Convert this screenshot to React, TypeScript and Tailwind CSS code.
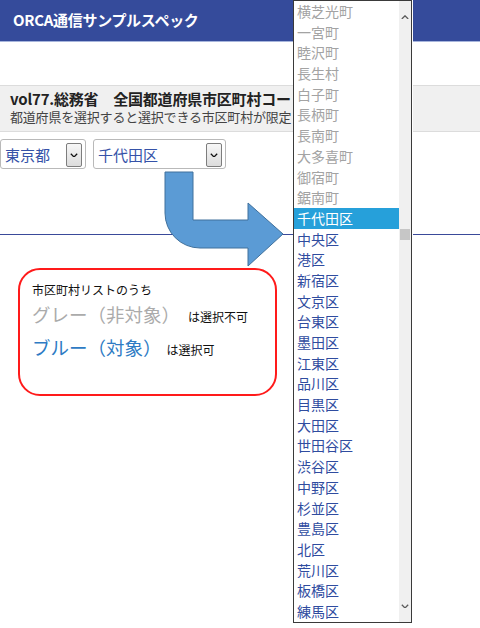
import React from "react";

const grayItems = ["横芝光町", "一宮町", "睦沢町", "長生村", "白子町", "長柄町", "長南町", "大多喜町", "御宿町", "鋸南町"];
const blueItems = ["中央区", "港区", "新宿区", "文京区", "台東区", "墨田区", "江東区", "品川区", "目黒区", "大田区", "世田谷区", "渋谷区", "中野区", "杉並区", "豊島区", "北区", "荒川区", "板橋区", "練馬区"];

function Chevron({ up = false, className = "" }: { up?: boolean; className?: string }) {
  return (
    <svg viewBox="0 0 10 6" className={className} fill="none" stroke="currentColor" strokeWidth="1.6">
      {up ? <path d="M1 5 L5 1 L9 5" /> : <path d="M1 1 L5 5 L9 1" />}
    </svg>
  );
}

function FakeSelect({ label, width }: { label: string; width: string }) {
  return (
    <div className={`flex h-[30px] items-center justify-between rounded-[3px] border border-[#b9b9b9] bg-white pl-[4px] pr-[3px] ${width}`}>
      <span className="text-[15px] leading-none text-[#3552a8]">{label}</span>
      <div className="mt-[2px] flex h-[24px] w-[16px] items-center justify-center rounded-[2px] border border-[#7d7d7d] bg-gradient-to-b from-[#f7f7f7] to-[#dcdcdc] text-[#111]">
        <Chevron className="w-[8px]" />
      </div>
    </div>
  );
}

// the open dropdown of the 市区町村 select, drawn over the page
function ListBox() {
  return (
    <div className="absolute left-[293px] top-0 z-10 flex h-[623px] w-[119px] border border-[#3a3a3a] bg-white shadow-[1px_0_0_#ffffff]">
      <ul className="flex-1 overflow-hidden text-[14px]">
        {grayItems.map((t) => (
          <li key={t} className="h-[20.7px] pl-[3px] leading-[20.7px] text-[#a3a3a3]">{t}</li>
        ))}
        <li className="h-[20.7px] bg-[#26a0da] pl-[3px] leading-[20.7px] text-white">千代田区</li>
        {blueItems.map((t) => (
          <li key={t} className="h-[20.7px] pl-[3px] leading-[20.7px] text-[#2f4c9f]">{t}</li>
        ))}
      </ul>
      <div className="flex w-[12px] flex-col bg-[#f0f0f0] text-[#5a5a5a]">
        <div className="flex h-[32px] items-center justify-center">
          <Chevron up className="w-[8px]" />
        </div>
        <div className="h-[196px]" />
        <div className="mx-auto h-[11px] w-[10px] bg-[#c6c6c6]" />
        <div className="flex-1" />
        <div className="flex h-[32px] items-center justify-center">
          <Chevron className="w-[8px]" />
        </div>
      </div>
    </div>
  );
}

export default function App() {
  return (
    <div className="relative h-[628px] w-[480px] overflow-hidden bg-white font-['Noto_Sans_CJK_JP',sans-serif] text-[#222]">
      <ListBox />

      <header className="flex h-[42px] items-center border-b border-[#a7b5dc] bg-[#354b9b] pl-[13px]">
        <h1 className="text-[15px] font-bold tracking-[-0.3px] text-white">ORCA通信サンプルスペック</h1>
      </header>

      <div className="mt-[43px] border-y border-[#dcdcdc] bg-[#f0f0f0] pb-[5px] pl-[10px] pt-[4px]">
        <div className="whitespace-nowrap text-[15px] font-bold leading-[18px] tracking-[-0.2px] text-[#222]">vol77.総務省　全国都道府県市区町村コード</div>
        <div className="whitespace-nowrap text-[13px] leading-[18px] tracking-[-0.2px] text-[#444]">都道府県を選択すると選択できる市区町村が限定</div>
      </div>

      <div className="mt-[7px] flex gap-[7px]">
        <FakeSelect label="東京都" width="w-[86px]" />
        <FakeSelect label="千代田区" width="w-[133px]" />
      </div>

      <div className="relative">
        <svg className="absolute left-[160px] top-[2px]" width="130" height="100" viewBox="0 0 130 100">
          <path
            d="M5 1 L33 1 L33 49 L88 49 L88 32 L123 63 L88 95 L88 77 L40 77 A35 35 0 0 1 5 42 Z"
            fill="#5b9bd5"
            stroke="#41719c"
            strokeWidth="1"
          />
        </svg>
        <div className="h-[65px]" />
        <div className="h-px bg-[#3a4a9a]" />

        <div className="ml-[18px] mt-[33px] h-[128px] w-[259px] rounded-[22px] border-2 border-[#ff1a1a] pl-[12px] pt-[12px]">
          <div className="h-[16px] text-[12px] leading-[16px] text-[#111]">市区町村リストのうち</div>
          <div className="mt-[3px] flex h-[33px] items-baseline whitespace-nowrap">
            <span className="text-[18.5px] text-[#ababab]">グレー（非対象）</span>
            <span className="ml-[8px] text-[12px] text-[#111]">は選択不可</span>
          </div>
          <div className="flex h-[33px] items-baseline whitespace-nowrap">
            <span className="text-[18.5px] text-[#2e7bc4]">ブルー（対象）</span>
            <span className="ml-[5px] text-[12px] text-[#111]">は選択可</span>
          </div>
        </div>
      </div>
    </div>
  );
}
